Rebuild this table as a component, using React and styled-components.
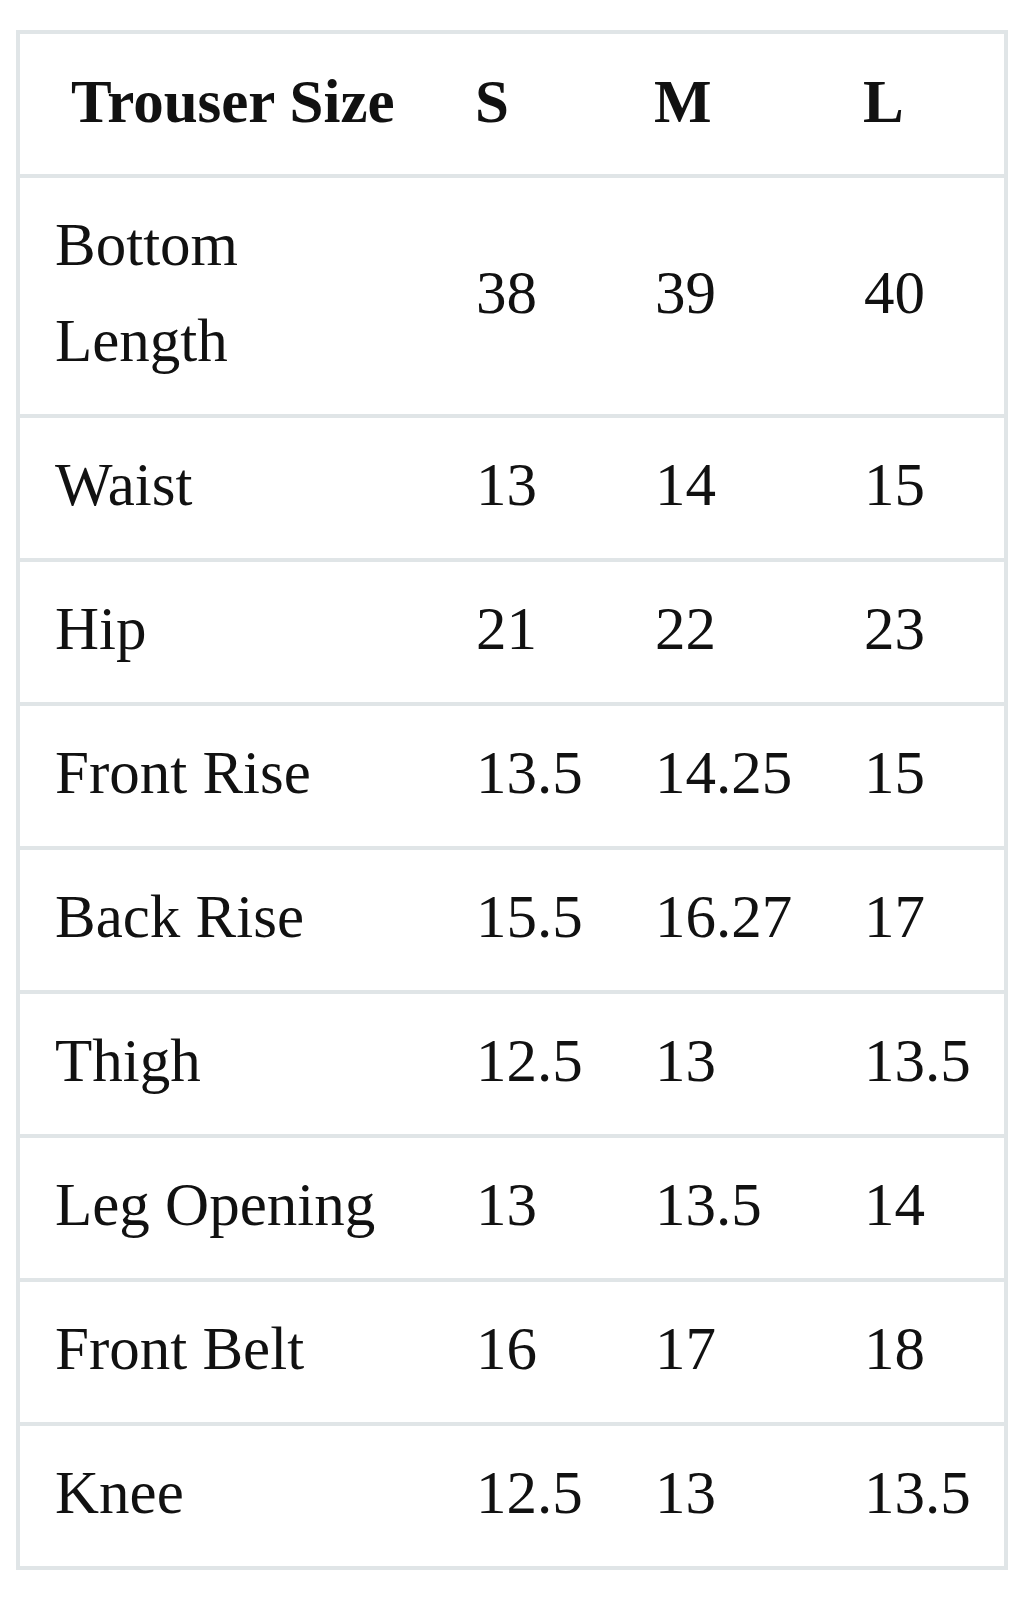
import styled, { createGlobalStyle } from 'styled-components';

const GlobalStyle = createGlobalStyle`
	body {
		margin: 0;
		background: #ffffff;
		font-family: 'Liberation Serif', 'Times New Roman', serif;
		color: #111111;
	}
`;

const LINE = '#e0e5e7';

const Page = styled.div`
	padding: 30px 19px 30px 16px;
`;

const Table = styled.table`
	width: 992px;
	table-layout: fixed;
	border-collapse: separate;
	border-spacing: 0;
	border: 4px solid ${LINE};
`;

const HeadCell = styled.th`
	height: 136px;
	padding: 0 0 4px ${({ $first }) => ($first ? '51px' : '35px')};
	text-align: left;
	vertical-align: middle;
	font-size: 61px;
	font-weight: bold;
	line-height: 96px;
	border-bottom: 4px solid ${LINE};
	white-space: nowrap;
`;

const Row = styled.tr`
	&:last-child td {
		border-bottom: none;
	}
`;

const Cell = styled.td`
	padding: 19px 0 25px ${({ $first }) => ($first ? '35px' : '36px')};
	vertical-align: middle;
	font-size: 61px;
	line-height: 96px;
	border-bottom: 4px solid ${LINE};
	white-space: nowrap;
`;

const sizes = [
	{ label: <>Bottom<br />Length</>, s: '38', m: '39', l: '40' },
	{ label: 'Waist', s: '13', m: '14', l: '15' },
	{ label: 'Hip', s: '21', m: '22', l: '23' },
	{ label: 'Front Rise', s: '13.5', m: '14.25', l: '15' },
	{ label: 'Back Rise', s: '15.5', m: '16.27', l: '17' },
	{ label: 'Thigh', s: '12.5', m: '13', l: '13.5' },
	{ label: 'Leg Opening', s: '13', m: '13.5', l: '14' },
	{ label: 'Front Belt', s: '16', m: '17', l: '18' },
	{ label: 'Knee', s: '12.5', m: '13', l: '13.5' },
];

export default function App() {
	return (
		<>
			<GlobalStyle />
			<Page>
				<Table>
					<colgroup>
						<col style={{ width: 420 }} />
						<col style={{ width: 179 }} />
						<col style={{ width: 209 }} />
						<col style={{ width: 176 }} />
					</colgroup>
					<thead>
						<tr>
							<HeadCell $first>Trouser Size</HeadCell>
							<HeadCell>S</HeadCell>
							<HeadCell>M</HeadCell>
							<HeadCell>L</HeadCell>
						</tr>
					</thead>
					<tbody>
						{sizes.map((row, i) => (
							<Row key={i}>
								<Cell $first>{row.label}</Cell>
								<Cell>{row.s}</Cell>
								<Cell>{row.m}</Cell>
								<Cell>{row.l}</Cell>
							</Row>
						))}
					</tbody>
				</Table>
			</Page>
		</>
	);
}
